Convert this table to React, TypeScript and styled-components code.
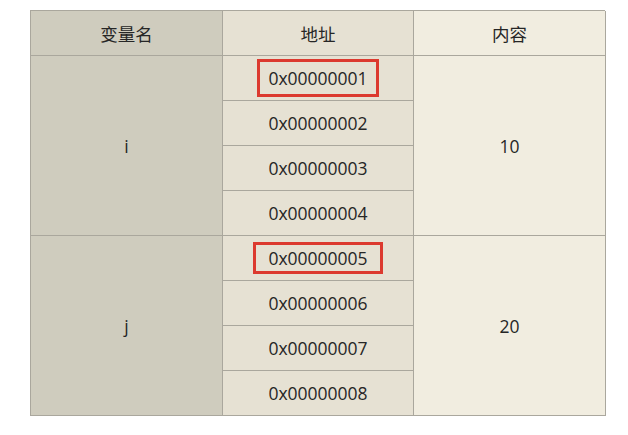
import styled, { createGlobalStyle } from 'styled-components'

const GlobalStyle = createGlobalStyle`
  html, body {
    margin: 0;
    padding: 0;
    background: #fff;
  }
  body {
    font-family: "Open Sans", "Noto Sans CJK SC", sans-serif;
    color: #262626;
  }
`

const Page = styled.div`
  padding: 10px 0 0 30px;
`

const Grid = styled.div`
  display: grid;
  grid-template-columns: 192px 191px 192px;
  grid-template-rows: repeat(9, 45px);
  width: 575px;
  border-top: 1px solid #aaa79d;
  border-left: 1px solid #aaa79d;
  box-sizing: border-box;
`

const Cell = styled.div<{ $bg: string; $rows?: number }>`
  display: flex;
  align-items: center;
  justify-content: center;
  background: ${p => p.$bg};
  grid-row: span ${p => p.$rows ?? 1};
  border-right: 1px solid #aaa79d;
  border-bottom: 1px solid #aaa79d;
  font-size: 17.5px;
`

const Mark = styled.span<{ $w: number; $h: number }>`
  display: inline-flex;
  align-items: center;
  justify-content: center;
  width: ${p => p.$w}px;
  height: ${p => p.$h}px;
  box-sizing: border-box;
  border: 3px solid #dc3a2f;
`

const NAME_BG = '#cfccbe'
const ADDR_BG = '#e6e1d3'
const VAL_BG = '#f1ede0'

const vars = [
  { name: 'i', value: '10', start: 1, box: [122, 38] },
  { name: 'j', value: '20', start: 5, box: [130, 32] },
]

const hex = (n: number) => '0x' + n.toString(16).padStart(8, '0')

export default function App() {
  return (
    <>
      <GlobalStyle />
      <Page>
        <Grid>
          <Cell $bg={NAME_BG}>变量名</Cell>
          <Cell $bg={ADDR_BG}>地址</Cell>
          <Cell $bg={VAL_BG}>内容</Cell>
          {vars.map(v => [
            <Cell key={v.name + 'n'} $bg={NAME_BG} $rows={4} style={{ gridColumn: 1 }}>
              {v.name}
            </Cell>,
            <Cell key={v.name + 'a0'} $bg={ADDR_BG}>
              <Mark $w={v.box[0]} $h={v.box[1]}>{hex(v.start)}</Mark>
            </Cell>,
            <Cell key={v.name + 'v'} $bg={VAL_BG} $rows={4}>
              {v.value}
            </Cell>,
            ...[1, 2, 3].map(k => (
              <Cell key={v.name + 'a' + k} $bg={ADDR_BG} style={{ gridColumn: 2 }}>
                {hex(v.start + k)}
              </Cell>
            )),
          ])}
        </Grid>
      </Page>
    </>
  )
}
